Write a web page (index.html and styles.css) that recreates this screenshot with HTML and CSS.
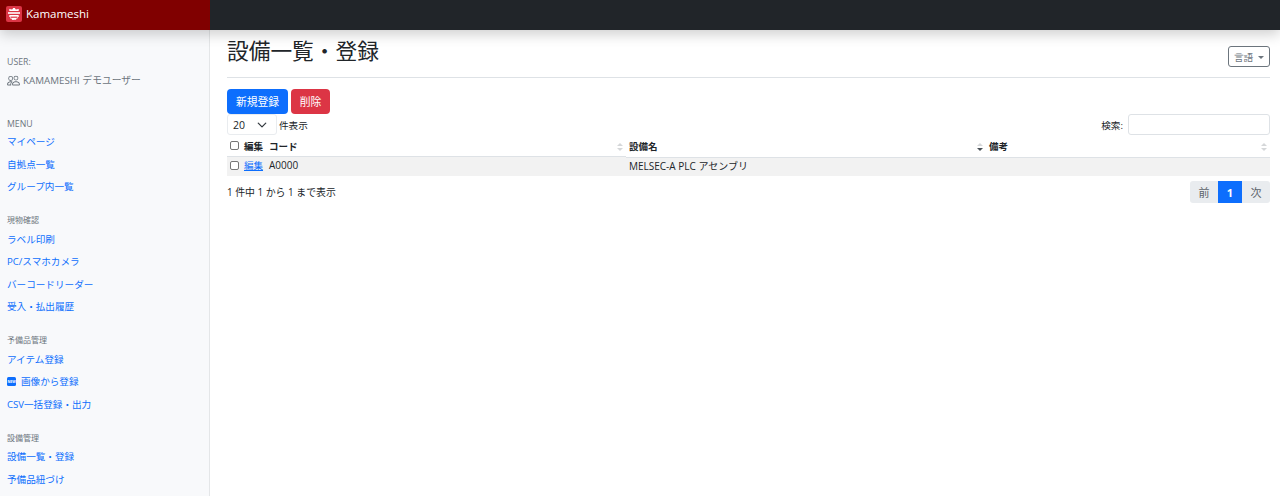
FILE: index.html
```html
<!DOCTYPE html>
<html lang="ja">
<head>
<meta charset="utf-8">
<title>設備一覧・登録</title>
<link rel="stylesheet" href="styles.css">
</head>
<body>
<header class="topbar">
  <a class="brand" href="#">
    <svg class="brand-icon" viewBox="0 0 16 16" width="16" height="16" aria-hidden="true">
      <rect width="16" height="16" rx="2" fill="#dc3545"/>
      <path d="M7 2h2l.4 1.200 1.700.3.900-.8 1 1-.5 1.300H3.500L3 3.700l1-1 .9.8 1.700-.3z" fill="#fff"/>
      <rect x="2" y="6.200" width="12" height="1.600" fill="#fff"/>
      <path d="M3.500 9h9l.5 1.500-1 .5-.2 1.300-1.300.2-.5 1.200-1 .1L8 13.800l-1 .1-1-.1-.5-1.200-1.300-.2L4 11l-1-.5z" fill="#fff"/>
      <rect x="4.500" y="10.600" width="7" height="1.200" fill="#dc3545"/>
    </svg>
    <span>Kamameshi</span>
  </a>
  <div class="topfill"></div>
</header>
<div class="shell">
  <nav class="sidebar">
    <div class="side-label">USER:</div>
    <div class="user">
      <svg class="user-icon" viewBox="0 0 16 16" width="13" height="13" aria-hidden="true" fill="#6c757d">
        <path d="M15 14s1 0 1-1-1-4-5-4-5 3-5 4 1 1 1 1zm-7.978-1L7 12.996c.001-.264.167-1.030.760-1.720C8.312 10.629 9.282 10 11 10c1.717 0 2.687.630 3.240 1.276.593.690.758 1.457.760 1.720l-.008.002-.014.002zM11 7a2 2 0 1 0 0-4 2 2 0 0 0 0 4m3-2a3 3 0 1 1-6 0 3 3 0 0 1 6 0M6.936 9.280a6 6 0 0 0-1.230-.247A7 7 0 0 0 5 9c-4 0-5 3-5 4q0 1 1 1h4.216A2.240 2.240 0 0 1 5 13c0-1.010.377-2.042 1.090-2.904.243-.294.526-.569.846-.816M4.920 10A5.500 5.500 0 0 0 4 13H1c0-.260.164-1.030.760-1.724.545-.636 1.492-1.256 3.160-1.275ZM1.500 5.500a3 3 0 1 1 6 0 3 3 0 0 1-6 0m3-2a2 2 0 1 0 0 4 2 2 0 0 0 0-4"/>
      </svg>
      <span>KAMAMESHI デモユーザー</span>
    </div>
    <div class="side-label group-first">MENU</div>
    <a class="side-link" href="#">マイページ</a>
    <a class="side-link" href="#">自拠点一覧</a>
    <a class="side-link" href="#">グループ内一覧</a>
    <div class="side-label label-cjk group">現物確認</div>
    <a class="side-link" href="#">ラベル印刷</a>
    <a class="side-link" href="#">PC/スマホカメラ</a>
    <a class="side-link" href="#">バーコードリーダー</a>
    <a class="side-link" href="#">受入・払出履歴</a>
    <div class="side-label label-cjk group">予備品管理</div>
    <a class="side-link" href="#">アイテム登録</a>
    <a class="side-link" href="#"><span class="new-badge">NEW</span>画像から登録</a>
    <a class="side-link" href="#">CSV一括登録・出力</a>
    <div class="side-label label-cjk group">設備管理</div>
    <a class="side-link" href="#">設備一覧・登録</a>
    <a class="side-link" href="#">予備品紐づけ</a>
  </nav>
  <main class="main">
    <div class="page-head">
      <h1>設備一覧・登録</h1>
      <button class="lang-btn" type="button">言語<span class="caret"></span></button>
    </div>
    <div class="actions">
      <button class="btn btn-blue" type="button">新規登録</button>
      <button class="btn btn-red" type="button">削除</button>
    </div>
    <div class="controls">
      <label class="length">
        <span class="fake-select">20<svg viewBox="0 0 16 16" width="10" height="10" aria-hidden="true"><path d="M2 5l6 6 6-6" fill="none" stroke="#343a40" stroke-width="2" stroke-linecap="round" stroke-linejoin="round"/></svg></span>
        <span>件表示</span>
      </label>
      <label class="search">
        <span>検索:</span>
        <input type="text" class="search-input">
      </label>
    </div>
    <table class="grid">
      <colgroup>
        <col class="col-code"><col class="col-name"><col class="col-note">
      </colgroup>
      <thead>
        <tr>
          <th class="th-first"><input type="checkbox" class="check"><span class="th-edit">編集</span><span>コード</span><span class="sort"><i class="up"></i><i class="down"></i></span></th>
          <th>設備名<span class="sort"><i class="up"></i><i class="down active"></i></span></th>
          <th>備考<span class="sort"><i class="up"></i><i class="down"></i></span></th>
        </tr>
      </thead>
      <tbody>
        <tr>
          <td class="td-first"><input type="checkbox" class="check"><a href="#" class="edit-link">編集</a><span>A0000</span></td>
          <td>MELSEC-A PLC アセンブリ</td>
          <td></td>
        </tr>
      </tbody>
    </table>
    <div class="foot">
      <div>1 件中 1 から 1 まで表示</div>
      <div class="pager">
        <span class="page first">前</span><span class="page current">1</span><span class="page last">次</span>
      </div>
    </div>
  </main>
</div>
</body>
</html>
```

FILE: styles.css
```css
* { box-sizing: border-box; }
html, body { margin: 0; height: 100%; overflow: hidden; }
body {
  font-family: "Open Sans", "Noto Sans CJK JP", sans-serif;
  font-size: 10px;
  color: #212529;
  background: #fff;
}
a { text-decoration: none; }
.topbar {
  position: relative;
  z-index: 2;
  display: flex;
  height: 30px;
  background: #212529;
  box-shadow: 0 4px 14px rgba(0,0,0,.2);
}
.brand {
  width: 210px;
  display: flex;
  align-items: center;
  gap: 4px;
  padding: 0 0 3px 6px;
  background: #800000;
  color: #fff;
  font-size: 11.500px;
}
.brand-icon { flex: none; }
.topfill { flex: 1; }
.shell { display: flex; height: 466px; }
.sidebar {
  width: 210px;
  flex: none;
  background: #f8f9fb;
  border-right: 1px solid #e4e6e8;
  padding: 27px 7px 0;
  overflow: hidden;
}
.side-label { color: #6c757d; font-size: 8.750px; line-height: 10px; }
.label-cjk { font-size: 8px; }
.user {
  display: flex;
  align-items: center;
  gap: 3px;
  margin-top: 6px;
  height: 14px;
  color: #6c757d;
  font-size: 9.800px;
}
.user-icon { flex: none; }
.group-first { margin-top: 32px; margin-bottom: 1px; }
.group { margin-top: 17.500px; margin-bottom: 2.500px; }
.side-link {
  display: flex;
  align-items: center;
  height: 22.500px;
  color: #0d6efd;
  font-size: 9.600px;
  white-space: nowrap;
}
.new-badge {
  flex: none;
  width: 9px;
  height: 9px;
  margin: 1px 5px 0 0;
  border-radius: 1.500px;
  background: #0d6efd;
  color: #fff;
  font-size: 3.500px;
  font-weight: 700;
  line-height: 9px;
  text-align: center;
}
.main { flex: 1; min-width: 0; padding: 0 10px 0 17px; }
.page-head {
  height: 48px;
  display: flex;
  justify-content: space-between;
  align-items: flex-start;
  border-bottom: 1px solid #dee2e6;
  padding-top: 7px;
}
h1 { margin: 0; font-size: 21.700px; font-weight: 400; line-height: 28px; }
.lang-btn {
  margin-top: 9px;
  width: 42px;
  height: 21px;
  padding: 0;
  border: 1px solid #6c757d;
  border-radius: 3px;
  background: #fff;
  color: #6c757d;
  font: inherit;
  font-size: 9.600px;
}
.caret {
  display: inline-block;
  margin-left: 5px;
  vertical-align: 2px;
  border-top: 3px solid #6c757d;
  border-left: 3px solid transparent;
  border-right: 3px solid transparent;
}
.actions { display: flex; gap: 3px; margin-top: 11px; }
.btn {
  height: 25px;
  border: 0;
  border-radius: 4px;
  color: #fff;
  font: inherit;
  font-size: 10.800px;
  padding: 0 0 1px;
}
.btn-blue { width: 61px; background: #0d6efd; }
.btn-red { width: 39px; background: #dc3545; }
.controls {
  display: flex;
  justify-content: space-between;
  align-items: center;
  height: 21px;
  font-size: 9.600px;
}
.length, .search { display: flex; align-items: center; }
.fake-select {
  display: flex;
  justify-content: space-between;
  align-items: center;
  width: 50px;
  height: 21px;
  padding: 0 9px 0 5px;
  margin-right: 2px;
  border: 1px solid #e9ecef;
  border-radius: 3px;
  font-size: 10.500px;
  color: #212529;
}
.search { gap: 5px; }
.search-input {
  width: 142px;
  height: 21px;
  border: 1px solid #dee2e6;
  border-radius: 3px;
  padding: 0;
}
.grid {
  width: 100%;
  table-layout: fixed;
  border-collapse: collapse;
  margin-top: 1px;
}
.col-code { width: 399px; }
.col-name { width: 360px; }
th, td { padding: 0 3px; text-align: left; white-space: nowrap; }
th {
  position: relative;
  height: 21px;
  font-weight: 700;
  font-size: 9.500px;
  border-bottom: 1px solid #dee2e6;
}
td { background: #f2f2f2; height: 19px; padding-bottom: 3px; font-size: 10px; }
.th-first, .td-first { display: flex; align-items: center; }
.th-first { padding-bottom: 1px; }
.check {
  width: 9px;
  height: 9px;
  margin: 0 5px 0 0;
  appearance: none;
  border: 1px solid #767676;
  border-radius: 2px;
  background: #fff;
  flex: none;
}
.th-edit, .edit-link { width: 25px; flex: none; }
.edit-link { color: #0d6efd; text-decoration: underline; font-size: 9.500px; }
.sort {
  position: absolute;
  right: 3px;
  top: 7px;
  display: flex;
  flex-direction: column;
  gap: 2px;
}
.sort i { display: block; border-left: 3px solid transparent; border-right: 3px solid transparent; }
.up { border-bottom: 3.500px solid #d5d7d9; }
.down { border-top: 3.500px solid #d5d7d9; }
.down.active { border-top-color: #495057; }
.foot {
  display: flex;
  justify-content: space-between;
  align-items: center;
  margin-top: 5px;
  height: 22px;
  font-size: 9.900px;
}
.pager { display: flex; }
.page {
  display: flex;
  align-items: center;
  justify-content: center;
  height: 22px;
  background: #e9ecef;
  color: #5c636a;
  font-size: 11px;
}
.first { width: 28px; border-radius: 3px 0 0 3px; }
.last { width: 28px; border-radius: 0 3px 3px 0; }
.current { width: 24px; background: #0d6efd; color: #fff; font-weight: 700; }
```
